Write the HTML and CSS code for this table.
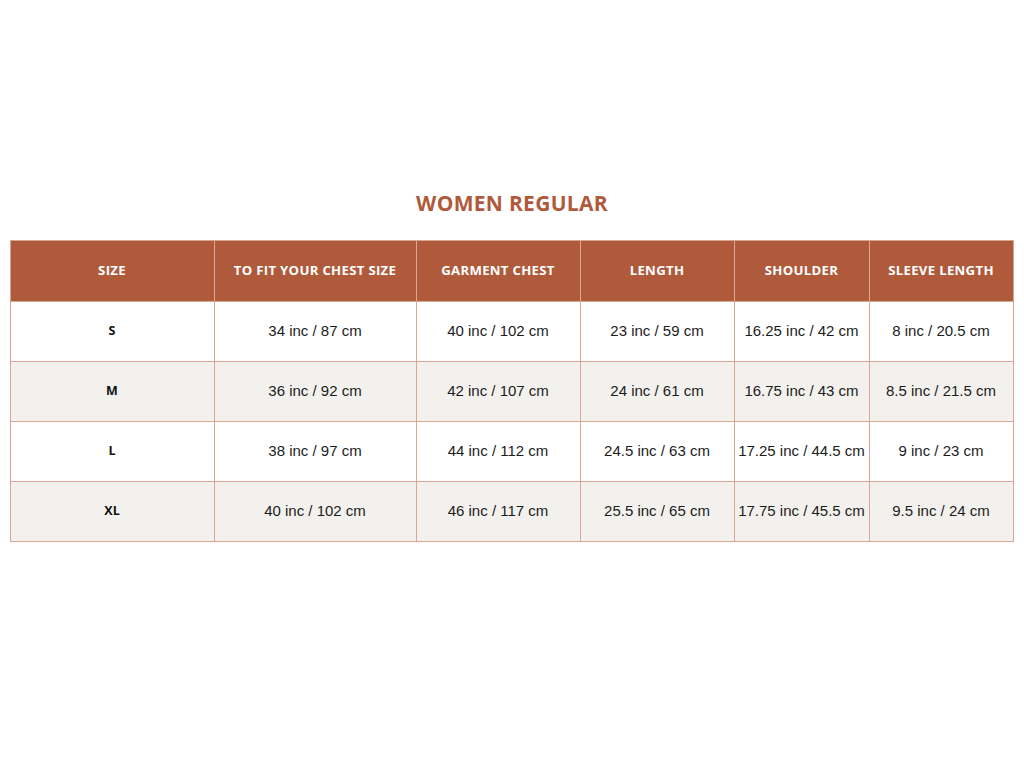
FILE: index.html
```html
<!DOCTYPE html>
<html>
<head>
<meta charset="utf-8">
<link rel="stylesheet" href="styles.css">
</head>
<body>
<main class="page">
  <h1 class="title">WOMEN REGULAR</h1>
  <table class="chart">
    <colgroup>
      <col class="c1"><col class="c2"><col class="c3"><col class="c4"><col class="c5"><col class="c6">
    </colgroup>
    <thead>
      <tr>
        <th>SIZE</th>
        <th>TO FIT YOUR CHEST SIZE</th>
        <th>GARMENT CHEST</th>
        <th>LENGTH</th>
        <th>SHOULDER</th>
        <th>SLEEVE LENGTH</th>
      </tr>
    </thead>
    <tbody>
      <tr>
        <td class="size">S</td>
        <td>34 inc / 87 cm</td>
        <td>40 inc / 102 cm</td>
        <td>23 inc / 59 cm</td>
        <td>16.25 inc / 42 cm</td>
        <td>8 inc / 20.5 cm</td>
      </tr>
      <tr class="alt">
        <td class="size">M</td>
        <td>36 inc / 92 cm</td>
        <td>42 inc / 107 cm</td>
        <td>24 inc / 61 cm</td>
        <td>16.75 inc / 43 cm</td>
        <td>8.5 inc / 21.5 cm</td>
      </tr>
      <tr>
        <td class="size">L</td>
        <td>38 inc / 97 cm</td>
        <td>44 inc / 112 cm</td>
        <td>24.5 inc / 63 cm</td>
        <td>17.25 inc / 44.5 cm</td>
        <td>9 inc / 23 cm</td>
      </tr>
      <tr class="alt">
        <td class="size">XL</td>
        <td>40 inc / 102 cm</td>
        <td>46 inc / 117 cm</td>
        <td>25.5 inc / 65 cm</td>
        <td>17.75 inc / 45.5 cm</td>
        <td>9.5 inc / 24 cm</td>
      </tr>
    </tbody>
  </table>
</main>
</body>
</html>
```

FILE: styles.css
```css
html, body {
  margin: 0;
  padding: 0;
  background: #ffffff;
}

.page {
  display: flex;
  flex-direction: column;
  align-items: center;
  padding-top: 189px;
  padding-left: 10px;
  padding-right: 10px;
}

.title {
  margin: 0 0 23px 0;
  font-family: "Open Sans", "Liberation Sans", sans-serif;
  font-weight: 700;
  font-size: 21px;
  line-height: 28px;
  color: #b05a3c;
  letter-spacing: 0.3px;
}

.chart {
  border-collapse: collapse;
  table-layout: fixed;
  width: 1003px;
  margin-left: -1px;
}

.c1 { width: 204px; }
.c2 { width: 202px; }
.c3 { width: 164px; }
.c4 { width: 154px; }
.c5 { width: 135px; }
.c6 { width: 144px; }

.chart th,
.chart td {
  border: 1px solid #dba595;
  text-align: center;
  padding: 0;
}

.chart th {
  background: #b05a3c;
  color: #ffffff;
  height: 57px;
  padding-bottom: 3px;
  font-family: "Open Sans", "Liberation Sans", sans-serif;
  font-weight: 700;
  font-size: 13.2px;
  letter-spacing: 0.3px;
  white-space: nowrap;
}

.chart td {
  height: 57px;
  padding-bottom: 2px;
  font-family: "Liberation Sans", Arial, sans-serif;
  font-size: 15px;
  color: #1c1c1c;
}

.chart td.size {
  font-family: "Open Sans", "Liberation Sans", sans-serif;
  font-weight: 700;
  font-size: 12.5px;
  color: #111111;
  line-height: 14px;
}

.chart tr.alt td {
  background: #f3f1ed;
}
```
